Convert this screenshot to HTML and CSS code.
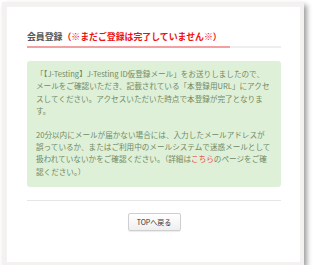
FILE: index.html
```html
<!DOCTYPE html>
<html lang="ja">
<head>
<meta charset="utf-8">
<link rel="stylesheet" href="styles.css">
</head>
<body>
<div class="card">
  <div class="inner">
    <h2 class="title">会員登録<span class="warn">（※まだご登録は完了していません※）</span></h2>
    <div class="alert">
      <p class="para">「【J-Testing】J-Testing ID仮登録メール」をお送りしましたので、<br>メールをご確認いただき、記載されている「本登録用URL」にアクセ<br>スしてください。アクセスいただいた時点で本登録が完了となりま<br>す。</p>
      <p class="para">20分以内にメールが届かない場合には、入力したメールアドレスが<br>誤っているか、またはご利用中のメールシステムで迷惑メールとして<br>扱われていないかをご確認ください。（詳細は<a class="link" href="#">こちら</a>のページをご確<br>認ください。）</p>
    </div>
    <hr class="rule">
    <div class="actions">
      <button class="btn" type="button">TOPへ戻る</button>
    </div>
  </div>
</div>
</body>
</html>
```

FILE: styles.css
```css
html, body {
  margin: 0;
  padding: 0;
  background: #ffffff;
}
body {
  font-family: "Noto Sans CJK JP", "Noto Sans", sans-serif;
}
.card {
  margin: 2px 0 0 2px;
  width: 302px;
  height: 263px;
  box-sizing: border-box;
  border-style: solid;
  border-color: #f4f2f0;
  border-width: 5px 4px 3px 5px;
  background: #ffffff;
  box-shadow: 3px 3px 5px rgba(0, 0, 0, 0.38);
}
.inner {
  padding: 24px 19px 0 20px;
}
.title {
  margin: 0;
  font-size: 8.9px;
  line-height: 12px;
  font-weight: bold;
  color: #555555;
  background-image: linear-gradient(to right, #f3a0a0 0%, #f3a0a0 80%, #eeeeee 80%, #eeeeee 100%);
  background-size: 100% 2px;
  background-position: left bottom;
  background-repeat: no-repeat;
  padding-bottom: 5px;
  white-space: nowrap;
}
.warn {
  color: #ee1111;
}
.alert {
  margin-top: 13px;
  background: #dff0d8;
  border-radius: 3px;
  padding: 7px 6px 9px 9px;
  color: #6f8a64;
  font-size: 7.6px;
  line-height: 12.4px;
  white-space: nowrap;
}
.para {
  margin: 0;
}
.para + .para {
  margin-top: 11px;
}
.link {
  color: #e84a4a;
  text-decoration: none;
}
.rule {
  margin: 13px 0 0 0;
  border: 0;
  border-top: 1px solid #e6e6e6;
  height: 0;
}
.actions {
  display: flex;
  justify-content: center;
  padding-top: 12px;
}
.btn {
  font-family: "Noto Sans CJK JP", "Noto Sans", sans-serif;
  font-size: 7px;
  line-height: 10px;
  color: #333333;
  width: 53px;
  height: 18px;
  padding: 0;
  border: 1px solid #cfcfcf;
  border-radius: 2px;
  background: linear-gradient(#ffffff, #efefef);
  box-shadow: 0 1px 1px rgba(0, 0, 0, 0.08);
}
```
